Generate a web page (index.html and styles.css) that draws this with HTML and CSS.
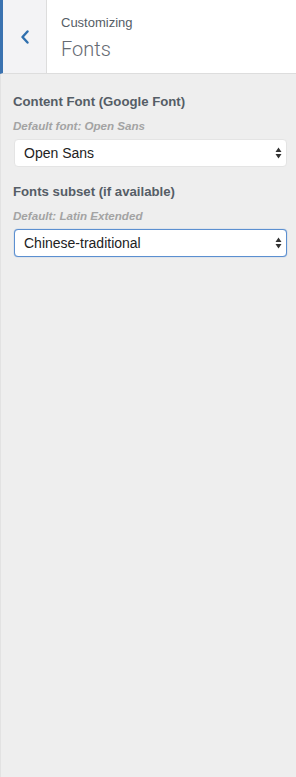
FILE: index.html
```html
<!DOCTYPE html>
<html>
<head>
    <meta charset="utf-8">
    <title>Customizing Fonts</title>
    <link rel="stylesheet" href="styles.css">
</head>
<body>
    <div class="Panel">
        <div class="Header">
            <button class="Back" type="button" aria-label="Back">
                <svg width="10" height="14" viewBox="0 0 10 14">
                    <path d="M7.5 1.5 L2.5 7 L7.5 12.5" fill="none" stroke="#2f6fae" stroke-width="2.4" stroke-linecap="round" stroke-linejoin="round"/>
                </svg>
            </button>
            <div class="Titles">
                <div class="Action">Customizing</div>
                <div class="Title">Fonts</div>
            </div>
        </div>

        <div class="Controls">
            <div class="Control">
                <label class="Label" for="font">Content Font (Google Font)</label>
                <div class="Description">Default font: Open Sans</div>
                <div class="SelectWrap">
                    <select id="font" class="Select">
                        <option>Open Sans</option>
                        <option>Roboto</option>
                        <option>Lato</option>
                    </select>
                    <svg class="Arrows" width="7" height="12" viewBox="0 0 7 12">
                        <path d="M3.5 0.5 L6.5 5 L0.5 5 Z M0.5 7 L6.5 7 L3.5 11.5 Z" fill="#333"/>
                    </svg>
                </div>
            </div>

            <div class="Control">
                <label class="Label" for="subset">Fonts subset (if available)</label>
                <div class="Description">Default: Latin Extended</div>
                <div class="SelectWrap">
                    <select id="subset" class="Select Focused">
                        <option>Chinese-traditional</option>
                        <option>Latin Extended</option>
                        <option>Cyrillic</option>
                    </select>
                    <svg class="Arrows" width="7" height="12" viewBox="0 0 7 12">
                        <path d="M3.5 0.5 L6.5 5 L0.5 5 Z M0.5 7 L6.5 7 L3.5 11.5 Z" fill="#333"/>
                    </svg>
                </div>
            </div>
        </div>
    </div>
</body>
</html>
```

FILE: styles.css
```css
html, body {
    margin: 0;
    padding: 0;
    height: 100%;
}

body {
    background: #eeeeee;
    font-family: "Liberation Sans", Arial, sans-serif;
    color: #555d66;
}

.Panel {
    min-height: 100%;
    border-left: 1px solid #e2e2e2;
    box-sizing: border-box;
}

.Header {
    display: flex;
    height: 73px;
    background: #ffffff;
    border-bottom: 1px solid #dddddd;
    border-left: 3px solid #3a72b0;
    margin-left: -1px;
}

.Back {
    width: 44px;
    padding: 0;
    border: none;
    border-right: 1px solid #dddddd;
    background: #f3f3f5;
    display: flex;
    align-items: center;
    justify-content: center;
    cursor: pointer;
}

.Titles {
    padding: 15px 0 0 14px;
}

.Action {
    font-size: 13px;
    line-height: 16px;
    color: #555d66;
}

.Title {
    font-family: Roboto, "Liberation Sans", sans-serif;
    font-size: 20px;
    font-weight: 300;
    line-height: 26px;
    margin-top: 5px;
    color: #666b73;
}

.Controls {
    padding: 19px 9px 0 12px;
}

.Control {
    margin-bottom: 16px;
}

.Label {
    display: block;
    font-size: 13.2px;
    font-weight: bold;
    line-height: 18px;
    color: #555d66;
}

.Description {
    font-size: 11.6px;
    font-style: italic;
    font-weight: bold;
    line-height: 14px;
    color: #a3a3a3;
    margin-top: 8px;
    margin-bottom: 6px;
}

.SelectWrap {
    position: relative;
    margin-left: 1px;
}

.Select {
    display: block;
    width: 100%;
    height: 28px;
    padding: 0 24px 0 9px;
    font-family: inherit;
    font-size: 14px;
    color: #222222;
    background: #ffffff;
    border: 1px solid #e4e4e4;
    border-radius: 4px;
    -webkit-appearance: none;
    -moz-appearance: none;
    appearance: none;
    outline: none;
}

.Focused {
    border-color: #5b8fd0;
    box-shadow: 0 0 1px #5b8fd0;
}

.Arrows {
    position: absolute;
    right: 5px;
    top: 8px;
    pointer-events: none;
}
```
